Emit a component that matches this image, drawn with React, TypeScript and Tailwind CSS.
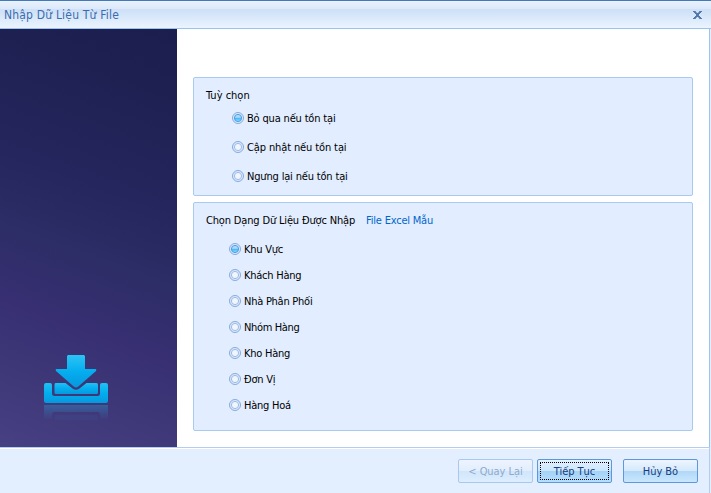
import React from 'react';

function Radio({ label, checked = false, spacing = 'tracking-[-0.25px]' }: { label: string; checked?: boolean; spacing?: string }) {
  return (
    <label className="flex h-[14px] items-start gap-[3px] whitespace-nowrap">
      <svg width="12" height="12" viewBox="0 0 12 12" className="shrink-0">
        <defs>
          <linearGradient id="dot" x1="0" y1="0" x2="0" y2="1">
            <stop offset="0" stopColor="#bfe0fb" />
            <stop offset="0.42" stopColor="#a4d6fa" />
            <stop offset="0.5" stopColor="#45b4f4" />
            <stop offset="1" stopColor="#8be6ff" />
          </linearGradient>
        </defs>
        <circle cx="6" cy="6" r="5.5" fill="#dceafc" stroke="#86aade" />
        <circle cx="6" cy="6" r="3.6" fill={checked ? 'url(#dot)' : '#f1f6fe'} stroke={checked ? '#4b9ce8' : '#9dbbe6'} strokeWidth="1" />
      </svg>
      <span className={spacing}>{label}</span>
    </label>
  );
}

function ImportIcon() {
  return (
    <svg width="64" height="68" viewBox="0 0 64 68">
      <defs>
        <linearGradient id="arrow" x1="0" y1="0" x2="0" y2="1">
          <stop offset="0" stopColor="#2cc4f5" />
          <stop offset="0.5" stopColor="#05aeef" />
          <stop offset="1" stopColor="#0797de" />
        </linearGradient>
        <linearGradient id="tray" x1="0" y1="0" x2="0" y2="1">
          <stop offset="0" stopColor="#20c0f5" />
          <stop offset="0.5" stopColor="#03aeee" />
          <stop offset="1" stopColor="#0798df" />
        </linearGradient>
        <linearGradient id="mirror" x1="0" y1="0" x2="0" y2="1">
          <stop offset="0" stopColor="#2aa0d8" stopOpacity="0.36" />
          <stop offset="1" stopColor="#2aa0d8" stopOpacity="0" />
        </linearGradient>
      </defs>
      <path d="M2 28H6Q8 28 8 30V38.5Q8 41 10.5 41H53.5Q56 41 56 38.5V30Q56 28 58 28H62Q64 28 64 30V46Q64 48 62 48H2Q0 48 0 46V30Q0 28 2 28Z" fill="url(#tray)" />
      <path d="M11.5 28H21.5L28.5 33.6Q32 36 35.5 33.6L42.5 28H52.5Q54 28 54 30V37.5Q54 39 52.5 39H12Q10.5 39 10.5 37.5V30Q10.5 28 11.5 28Z" fill="url(#tray)" />
      <path d="M24.3 0H39.7Q41 0 41 1.5V14H51.5Q53 14.2 52 16L34 31.8Q32 33.4 30 31.8L12 16Q11 14.2 12.5 14H23V1.5Q23 0 24.3 0Z" fill="url(#arrow)" />
      <path d="M0 50H64V65H56V60Q56 57 53.5 57H10.5Q8 57 8 60V65H0Z" fill="url(#mirror)" />
      <path d="M10.5 65V62Q10.5 60 12.5 60H52Q54 60 54 62V65Z" fill="#2aa0d8" fillOpacity="0.07" />
    </svg>
  );
}

const groupClass = 'rounded-[2px] border border-[#a9caf0] bg-[#e2edff] px-3';
const buttonClass = 'h-6 w-[75px] rounded-[2px] border p-[2px] text-[11px] leading-none tracking-[-0.05px]';
const activeClass = 'border-[#5e97dc] text-[#153c7e]';

export default function App() {
  return (
    <div className="flex h-[493px] w-[711px] flex-col overflow-hidden bg-[#e3eefe] font-['DejaVu_Sans_Condensed','DejaVu_Sans',sans-serif] text-[11px] leading-[14px] text-black">
      <header className="flex h-[29px] shrink-0 items-center justify-between border-t border-b border-t-[#4479b9] border-b-[#9bc3ee] bg-[linear-gradient(#e9f2fd_0%,#dce9fa_28%,#cde0f7_32%,#eaf4fe_100%)] pr-[9px] pl-1">
        <h1 className="pt-px text-[12px] tracking-[0.19px] whitespace-nowrap text-[#3c6cae]">Nhập Dữ Liệu Từ File</h1>
        <svg width="9" height="8" viewBox="0 0 9 8">
          <path d="M0 0H2.8V1H3.6V2H5.4V1H6.2V0H9V1H8V2H7V3H6V5H7V6H8V7H9V8H6.2V7H5.4V6H3.6V7H2.8V8H0V7H1V6H2V5H3V3H2V2H1V1H0Z" fill="#5277ad" />
        </svg>
      </header>

      <main className="mr-px flex h-[418px] shrink-0 border-r border-[#9bc3ee] bg-white">
        <aside className="flex w-[177px] shrink-0 items-end bg-[linear-gradient(200deg,#1c1e4e_0%,#202154_20%,#25265d_38%,#2d2d67_54%,#372f72_69%,#3c3677_80%,#474082_100%)] pb-[24px] pl-11">
          <ImportIcon />
        </aside>
        <div className="flex flex-1 flex-col gap-[6px] pt-12 pr-4 pl-4">
          <section className={`${groupClass} h-[119px] pt-[11px]`}>
            <h2>Tuỳ chọn</h2>
            <div className="mt-[9px] flex flex-col gap-[15px] pl-[26px]">
              <Radio label="Bỏ qua nếu tồn tại" checked spacing="tracking-[-0.17px]" />
              <Radio label="Cập nhật nếu tồn tại" spacing="tracking-[-0.12px]" />
              <Radio label="Ngưng lại nếu tồn tại" spacing="tracking-[-0.17px]" />
            </div>
          </section>
          <section className={`${groupClass} h-[229px] pt-[11px]`}>
            <div className="flex whitespace-nowrap">
              <h2 className="w-[160px] tracking-[-0.16px]">Chọn Dạng Dữ Liệu Được Nhập</h2>
              <a className="tracking-[-0.2px] text-[#0066cc]">File Excel Mẫu</a>
            </div>
            <div className="mt-[15px] flex flex-col gap-3 pl-[23px]">
              <Radio label="Khu Vực" checked />
              <Radio label="Khách Hàng" />
              <Radio label="Nhà Phân Phối" />
              <Radio label="Nhóm Hàng" spacing="tracking-[-0.35px]" />
              <Radio label="Kho Hàng" />
              <Radio label="Đơn Vị" />
              <Radio label="Hàng Hoá" />
            </div>
          </section>
        </div>
      </main>

      <footer className="mr-px flex h-[46px] shrink-0 border-t border-r border-[#b5cdec] pt-[11px] pl-[458px] shadow-[inset_0_1px_white]">
        <button className={`${buttonClass} border-[#a9c8ed] bg-[linear-gradient(#edf4fe_0%,#e2eefd_48%,#d2e6fb_52%,#dceefe_100%)] text-[#8fa9cc]`}>&lt; Quay Lại</button>
        <button className={`${buttonClass} ${activeClass} ml-1 bg-[linear-gradient(#e4f1fe_0%,#cce6fc_48%,#a5d3f7_52%,#b5dffc_100%)]`}>
          <span className="flex h-full items-center justify-center border border-dotted border-black">Tiếp Tục</span>
        </button>
        <button className={`${buttonClass} ${activeClass} ml-[11px] bg-[linear-gradient(#edf5fe_0%,#d6e9fc_48%,#b1d8f8_52%,#c9e7fd_100%)]`}>Hủy Bỏ</button>
      </footer>
    </div>
  );
}
